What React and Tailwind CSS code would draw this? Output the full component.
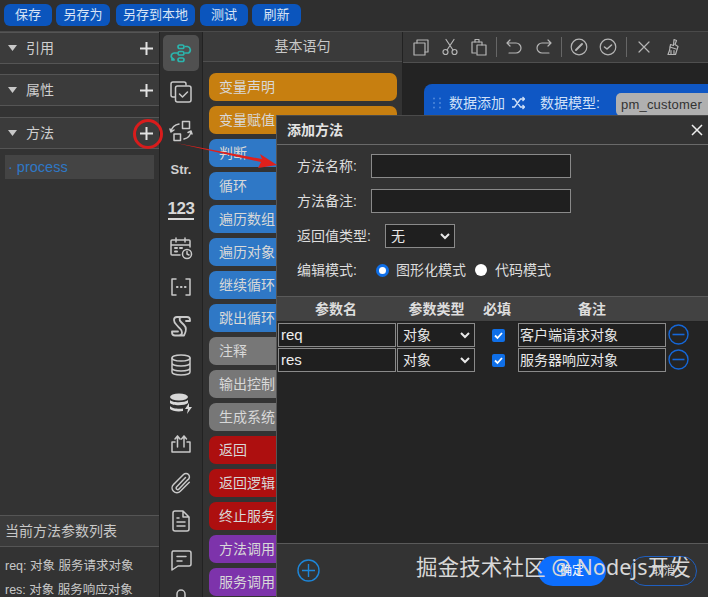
import React from "react";

const font = { fontFamily: '"Liberation Sans","Noto Sans CJK SC",sans-serif' };

const Plus = ({ className = "" }) => (
  <svg width="15" height="15" viewBox="0 0 15 15" className={className}>
    <path d="M7.5 1v13M1 7.5h13" stroke="#e2e2e2" strokeWidth="2" />
  </svg>
);

const Section = ({ title, mt }) => (
  <div className={`h-[32px] shrink-0 flex items-center bg-[#3b3b3b] border-y border-y-[#555] pl-[8px] pr-[4px] ${mt}`}>
    <svg width="10" height="8" viewBox="0 0 10 8"><path d="M0 1h9L4.5 7z" fill="#c8c8c8" /></svg>
    <span className="ml-[8px] text-[14px] text-[#cfcfcf]">{title}</span>
    <Plus className="ml-auto mr-[1px]" />
  </div>
);

const I = ({ children, size = 24, vb = "0 0 24 24", sw = 1.5, stroke = "#c9c9c9", className = "" }) => (
  <svg className={className} width={size} height={size} viewBox={vb} fill="none" stroke={stroke} strokeWidth={sw} strokeLinecap="round" strokeLinejoin="round">
    {children}
  </svg>
);

const railIcons = [
  <I stroke="#2bb5ad" sw="1.7"><rect x="9" y="4" width="6" height="3.500" rx="1.700" /><rect x="9" y="10.500" width="6" height="3.500" rx="1.700" /><rect x="9" y="17" width="6" height="3.500" rx="1.700" /><path d="M16.500 5.500h2a3.500 3.500 0 0 1 1 6.500h-3M8 12H5a3 3 0 0 0-2 5l2 1.500M3 17v2h2" /></I>,
  <I><path d="M17 5V4a2 2 0 0 0-2-2H4a2 2 0 0 0-2 2v11a2 2 0 0 0 2 2h2" /><rect x="6.500" y="6" width="15.500" height="16" rx="2" /><path d="M10.500 14l3 3 5-5" /></I>,
  <I><rect x="13.500" y="2.500" width="7" height="7" /><rect x="5" y="15" width="6.500" height="6.500" /><path d="M2 13a9 9 0 0 1 8-8M2 13l-1-3M2 13l3-2M22 12a9 9 0 0 1-7 8M22 12l-3 1.500M22 12l1 3" /></I>,
  <span className="text-[13px] font-bold text-[#d0d0d0]">Str.</span>,
  <span className="text-[17px] font-bold text-[#d8d8d8] leading-[19px] border-b-2 border-b-[#d8d8d8] tracking-[-0.5px]">123</span>,
  <I><path d="M11 19H3a1 1 0 0 1-1-1V5a1 1 0 0 1 1-1h17a1 1 0 0 1 1 1v6M2 9h19M7 2v4M16 2v4" /><path d="M6 12h2M11 12h2M6 15.500h2" strokeWidth="2" /><circle cx="18" cy="18" r="4.500" /><path d="M18 15.500V18l2 1" /></I>,
  <I><path d="M7 4H3v16h4M17 4h4v16h-4" /><path d="M8 12h.5M12 12h.5M16 12h.5" strokeWidth="2.200" /></I>,
  <I sw="1.800"><path d="M8 3h10a3 3 0 0 1 3 3v1h-4M8 3a3 3 0 0 0-3 3c0 3 2 4 4 6.500s4 3 4 6a3 3 0 0 1-3 3H6a3 3 0 0 1-3-3v-1h6M13 3c-3 0-3 3-1 5l3 3c3 3 2 7 0 10.500H10" /></I>,
  <I><ellipse cx="12" cy="5" rx="9" ry="3" /><path d="M3 5v14c0 1.700 4 3 9 3s9-1.300 9-3V5M3 10c0 1.700 4 3 9 3s9-1.300 9-3M3 15c0 1.700 4 3 9 3s9-1.300 9-3" /></I>,
  <svg width="24" height="24" viewBox="0 0 24 24" fill="#d8d8d8"><ellipse cx="10" cy="5" rx="9" ry="3.500" /><path d="M1 8c2 3 15 3 18 0v3c-3 3-16 3-18 0zM1 14c2 3 10 3 13 2.500V19c-5 1-11 0-13-2z" /><path d="M20 11l-4 6h3l-1 5 5-7h-3z" /></svg>,
  <I><path d="M6 11H3v10h18V11h-3M8.500 16V5M6 8l2.500-3L11 8M15 16V5M12.500 8L15 5l2.500 3" /></I>,
  <I><path d="M19.500 4.500a3.500 3.500 0 0 0-5 0L4.500 14.500a4.800 4.800 0 0 0 6.800 6.800l9-9M16.500 7.500l-9 9.500a1.500 1.500 0 0 0 2.500 2l8.500-9a3.500 3.500 0 0 0 1-5.500" /></I>,
  <I><path d="M14 2H6a2 2 0 0 0-2 2v16a2 2 0 0 0 2 2h12a2 2 0 0 0 2-2V8zM14 2v6h6M8 13h8M8 17h8M8 9h2" /></I>,
  <I><path d="M4 3h16a2 2 0 0 1 2 2v11a2 2 0 0 1-2 2H9l-6 4V5a2 2 0 0 1 1-2zM8 8.500h9M8 13h5" /></I>,
  <I><rect x="4" y="11" width="16" height="11" rx="2" /><path d="M8 11V7a4 4 0 0 1 8 0v4" /></I>,
];

const pills = [
  ["变量声明", "bg-[#c77f10]"], ["变量赋值", "bg-[#c77f10]"],
  ["判断", "bg-[#2f78c6]"], ["循环", "bg-[#2f78c6]"], ["遍历数组", "bg-[#2f78c6]"], ["遍历对象", "bg-[#2f78c6]"], ["继续循环", "bg-[#2f78c6]"], ["跳出循环", "bg-[#2f78c6]"],
  ["注释", "bg-[#777777]"], ["输出控制", "bg-[#777777]"], ["生成系统", "bg-[#777777]"],
  ["返回", "bg-[#ad0f0f]"], ["返回逻辑", "bg-[#ad0f0f]"], ["终止服务", "bg-[#ad0f0f]"],
  ["方法调用", "bg-[#7d33ab]"], ["服务调用", "bg-[#7d33ab]"],
];

const Tool = ({ children, className = "" }) => <I size={18} vb="0 0 18 18" sw={1.2} stroke="#b5b5b5" className={className}>{children}</I>;
const Sep = ({ className = "" }) => <div className={`w-px h-[20px] bg-[#666] ${className}`} />;

const fieldBox = "h-[24px] bg-[#1f1f1f] border border-[#8a8a8a]";

const Sel = ({ text, w }) => (
  <div className={`${w} h-[24px] border border-[#8a8a8a] bg-[#1f1f1f] flex items-center pl-[5px] pr-[4px] text-[14px] text-[#e8e8e8]`}>
    <span>{text}</span>
    <svg className="ml-auto" width="10" height="8" viewBox="0 0 10 8" fill="none"><path d="M1 2l4 4 4-4" stroke="#e8e8e8" strokeWidth="2" /></svg>
  </div>
);

const Check = () => (
  <svg width="13" height="13" viewBox="0 0 13 13"><rect width="13" height="13" rx="2" fill="#0f6fe8" /><path d="M3 6.500l2.500 2.500 4.500-5" stroke="#fff" strokeWidth="1.800" fill="none" /></svg>
);

const Minus = () => (
  <svg width="21" height="21" viewBox="0 0 21 21" fill="none" stroke="#1567d8" strokeWidth="1.400"><circle cx="10.500" cy="10.500" r="9.500" /><path d="M4.500 10.500h12" strokeWidth="1.600" /></svg>
);

const Row = ({ name, note }) => (
  <div className="flex items-center h-[24px] mb-[1px] pl-[1px]">
    <div className={`w-[118px] ${fieldBox} pl-[2px] text-[15px] leading-[22px] text-[#eeeeee]`}>{name}</div>
    <div className="ml-[1px]"><Sel text="对象" w="w-[78px]" /></div>
    <div className="w-[43px] flex justify-center pl-[4px]"><Check /></div>
    <div className={`w-[148px] ${fieldBox} pl-[1px] text-[14px] leading-[22px] text-[#e8e8e8] whitespace-nowrap overflow-hidden`}>{note}</div>
    <div className="ml-[2px] -mt-[2px]"><Minus /></div>
  </div>
);

const topButtons = [
  ["保存", "w-[48px]"],
  ["另存为", "w-[54px] ml-[4px]"],
  ["另存到本地", "w-[79px] ml-[6px]"],
  ["测试", "w-[48px] ml-[5px]"],
  ["刷新", "w-[49px] ml-[4px]"],
];

export default function App() {
  return (
    <div style={font} className="relative w-[708px] h-[597px] overflow-hidden bg-[#2d2d2d] text-[#cccccc] flex flex-col">
      {/* top bar */}
      <div className="h-[32px] shrink-0 bg-[#2f2f2f] flex items-start pt-[4px] pl-[4px] border-b border-b-[#4a4a4a]">
        {topButtons.map(([t, c]) => (
          <div key={t} className={`h-[22px] rounded-[6px] bg-[#0b55bd] text-center text-[13px] leading-[22px] text-[#d6e3f5] ${c}`}>{t}</div>
        ))}
      </div>
      <div className="flex flex-1 min-h-0">
        {/* left panel */}
        <div className="w-[160px] shrink-0 flex flex-col bg-[#333333] border-r border-r-[#222]">
          <Section title="引用" mt="mt-0" />
          <Section title="属性" mt="mt-[10px]" />
          <Section title="方法" mt="mt-[11px]" />
          <div className="mx-[5px] mt-[6px] h-[24px] bg-[#444444] pl-[3px] text-[14.500px] leading-[24px] text-[#2f78c6]">· process</div>
          <div className="mt-auto border-y border-y-[#555] bg-[#3b3b3b] h-[32px] pl-[5px] text-[14px] leading-[30px] text-[#c8c8c8]">当前方法参数列表</div>
          <div className="h-[50px] pl-[5px] pt-[7px] text-[12.500px] leading-[24px] text-[#c8c8c8] whitespace-nowrap">
            <div>req: 对象 服务请求对象</div>
            <div>res: 对象 服务响应对象</div>
          </div>
        </div>
        {/* icon rail */}
        <div className="w-[43px] shrink-0 bg-[#2f2f2f] border-r border-r-[#222] flex flex-col items-center pt-[3px] overflow-hidden">
          {railIcons.map((ic, i) => (
            <div key={i} className={`w-[36px] h-[36px] mb-[3px] shrink-0 rounded-[5px] flex items-center justify-center ${i === 0 ? "bg-[#505050]" : ""}`}>{ic}</div>
          ))}
        </div>
        {/* palette */}
        <div className="w-[200px] shrink-0 bg-[#333333] border-r border-r-[#222] flex flex-col overflow-hidden">
          <div className="h-[30px] shrink-0 border-b border-b-[#4f4f4f] bg-[#3a3a3a] text-center text-[14px] leading-[29px] text-[#c8c8c8]">基本语句</div>
          <div className="pl-[6px] pr-[5px] pt-[11px] flex flex-col gap-[5px]">
            {pills.map(([t, c]) => (
              <div key={t} className={`h-[28px] shrink-0 rounded-[7px] pl-[10px] text-[14px] leading-[28px] text-[#d8d8d8] ${c}`}>{t}</div>
            ))}
          </div>
        </div>
        {/* canvas */}
        <div className="flex-1 min-w-0 bg-[#232323] flex flex-col overflow-hidden">
          <div className="h-[31px] shrink-0 bg-[#363636] border-b border-b-[#4f4f4f] flex items-center pl-[9px]">
            <Tool><path d="M5 5V2h11v12h-3" /><rect x="2" y="5" width="11" height="12" /></Tool>
            <Tool className="ml-[11px]"><circle cx="4.500" cy="14" r="2.500" /><circle cx="13.500" cy="14" r="2.500" /><path d="M6 12L13 1.500M12 12L5 1.500" /></Tool>
            <Tool className="ml-[11px]"><path d="M6 15H2V4h10v3" /><rect x="7" y="7" width="9" height="10" /><path d="M5 4V1.500h4V4" /></Tool>
            <Sep className="ml-[8px]" />
            <Tool className="ml-[8px]"><path d="M5 2L2 5l3 3M2 5h9a4.500 4.500 0 0 1 0 10H4" /></Tool>
            <Tool className="ml-[12px]"><path d="M13 2l3 3-3 3M16 5H7a4.500 4.500 0 0 0 0 10h7" /></Tool>
            <Sep className="ml-[8px]" />
            <Tool className="ml-[8px]"><circle cx="9" cy="9" r="7.800" /><path d="M6 12l6-6" strokeWidth="2" /></Tool>
            <Tool className="ml-[11px]"><circle cx="9" cy="9" r="7.800" /><path d="M5.500 9l2.500 2 4.500-4" strokeWidth="1.600" /></Tool>
            <Sep className="ml-[9px]" />
            <Tool className="ml-[8px]"><path d="M4 4l10 10M14 4L4 14" /></Tool>
            <Tool className="ml-[11px]"><path d="M10 1.500l2.500 1-1.500 4 3 2-2.500 8H4l1.500-4 1-6 3 1z" /><path d="M7 12.500v3M10 12.500v3M6 9l6 2" /></Tool>
          </div>
          <div className="ml-[21px] mt-[21px] h-[40px] rounded-tl-[8px] bg-[#0f57c4] flex items-start pt-[9px] pl-[9px] text-[14px] text-[#cfe0f7] whitespace-nowrap">
            <svg className="shrink-0 mt-[4px] mr-[8px]" width="8" height="12" viewBox="0 0 8 12" fill="#4f88da"><circle cx="1" cy="1.500" r="1" /><circle cx="7" cy="1.500" r="1" /><circle cx="1" cy="6" r="1" /><circle cx="7" cy="6" r="1" /><circle cx="1" cy="10.500" r="1" /><circle cx="7" cy="10.500" r="1" /></svg>
            <span className="shrink-0 leading-[20px]">数据添加</span>
            <svg className="shrink-0 ml-[6px] mt-[3px]" width="14" height="14" viewBox="0 0 14 14" fill="none" stroke="#cfe0f7" strokeWidth="1.300"><path d="M1 3h2.500l6 8H13M1 11h2.500l6-8H13M11.500 1L13.500 3l-2 2M11.500 9l2 2-2 2" /></svg>
            <span className="shrink-0 ml-[15px] w-[76px] leading-[20px]">数据模型:</span>
            <span className="shrink-0 h-[23px] w-[140px] rounded-[5px] bg-[#b0b0b0] pl-[5px] text-[13px] leading-[23px] tracking-[0.2px] text-[#333]">pm_customer</span>
          </div>
        </div>
      </div>

      {/* red annotation */}
      <div className="absolute left-[133px] top-[119px] w-[30px] h-[30px] rounded-full border-[3px] border-[#d81c1c]" />

      {/* dialog */}
      <div className="absolute left-[276px] top-[115px] w-[432px] h-[482px] bg-[#242424] border-l border-l-[#555] flex flex-col">
        <div className="h-[30px] shrink-0 bg-[#333333] border-t border-t-[#4a4a4a] flex items-center pl-[10px] pr-[5px] text-[14px] font-bold text-[#e4e4e4] border-b border-b-[#6a6a6a]">
          <span>添加方法</span>
          <svg className="ml-auto" width="12" height="12" viewBox="0 0 12 12"><path d="M1 1l10 10M11 1L1 11" stroke="#eee" strokeWidth="1.500" /></svg>
        </div>
        <div className="h-[152px] shrink-0 bg-[#333333] pl-[20px] pt-[9px] text-[14px] text-[#dddddd] border-b border-b-[#5a5a5a] whitespace-nowrap">
          <div className="flex items-center h-[24px]"><span className="w-[74px]">方法名称:</span><div className="w-[200px] h-[24px] bg-[#1f1f1f] border border-[#8a8a8a]" /></div>
          <div className="flex items-center h-[24px] mt-[11px]"><span className="w-[74px]">方法备注:</span><div className="w-[200px] h-[24px] bg-[#1f1f1f] border border-[#8a8a8a]" /></div>
          <div className="flex items-center h-[24px] mt-[11px]"><span className="w-[88px]">返回值类型:</span><Sel text="无" w="w-[70px]" /></div>
          <div className="flex items-center h-[24px] mt-[10px]">
            <span className="w-[79px]">编辑模式:</span>
            <span className="w-[13px] h-[13px] rounded-full border-[3px] border-[#0f6fe8] bg-white" />
            <span className="ml-[7px]">图形化模式</span>
            <span className="ml-[9px] w-[12px] h-[12px] rounded-full bg-white" />
            <span className="ml-[8px]">代码模式</span>
          </div>
        </div>
        <div className="h-[25px] shrink-0 bg-[#424242] border-b border-b-[#222] flex items-center text-[14px] font-bold text-[#dddddd] text-center">
          <span className="w-[118px]">参数名</span>
          <span className="w-[83px]">参数类型</span>
          <span className="w-[38px]">必填</span>
          <span className="w-[152px]">备注</span>
        </div>
        <div className="pt-[1px]">
          <Row name="req" note="客户端请求对象" />
          <Row name="res" note="服务器响应对象" />
        </div>
        <div className="mt-auto h-[54px] shrink-0 bg-[#333333] border-t border-t-[#5a5a5a] flex items-center pl-[20px] pr-[11px]">
          <svg width="23" height="23" viewBox="0 0 23 23" fill="none" stroke="#1e86d8" strokeWidth="1.400"><circle cx="11.500" cy="11.500" r="10.500" /><path d="M5 11.500h13M11.500 5v13" /></svg>
          <div className="ml-auto w-[68px] h-[30px] rounded-full bg-[#0d6efd] text-center text-[12px] leading-[30px] text-white">确定</div>
          <div className="ml-[24px] w-[67px] h-[30px] rounded-full border border-[#1f5fc0] text-center text-[12px] leading-[28px] text-[#ddd]">取消</div>
        </div>
      </div>

      {/* arrow */}
      <svg className="absolute left-[170px] top-[135px]" width="115" height="40" viewBox="0 0 115 40">
        <path d="M6 8L92 24L90 19L107 30L88 33L91 27z" fill="#e0201c" />
      </svg>

      {/* watermark */}
      <div className="absolute left-[416px] top-[552px] text-[21.500px] tracking-[0.1px] leading-[30px] text-[#d8d8d8] whitespace-nowrap font-['Noto_Sans','Noto_Sans_CJK_SC',sans-serif]">掘金技术社区 @ Nodejs开发</div>
    </div>
  );
}
